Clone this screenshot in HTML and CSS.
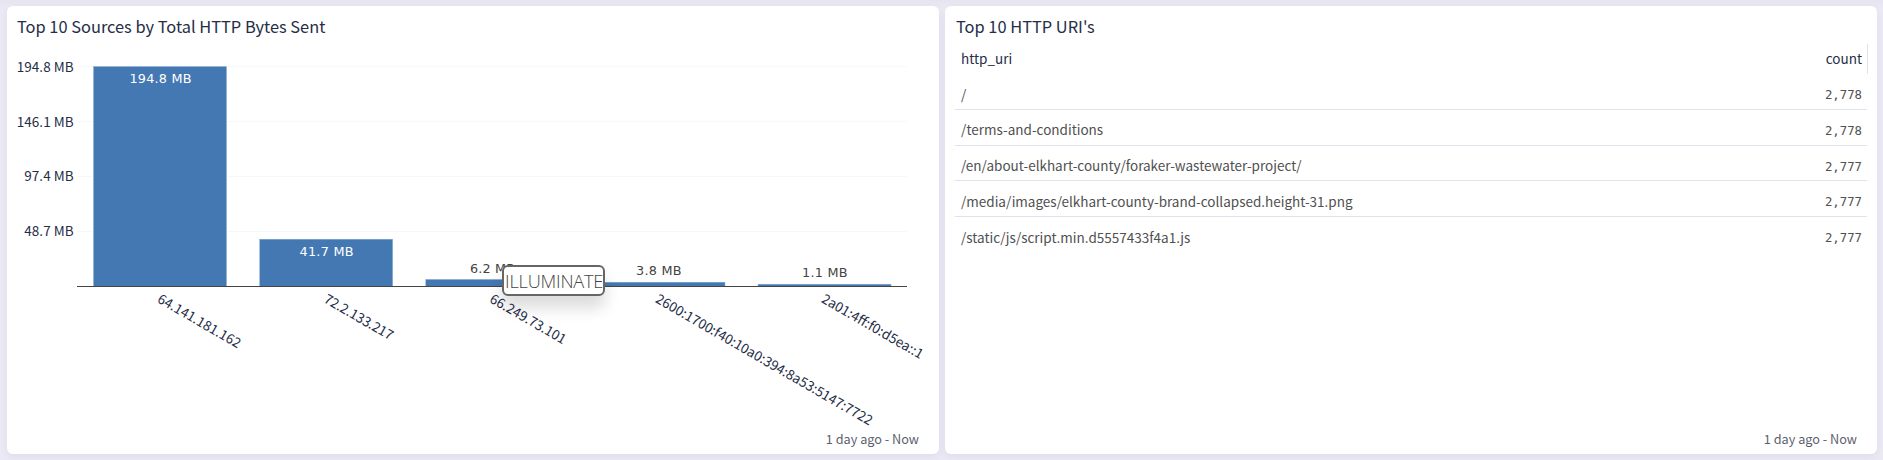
FILE: index.html
```html
<!DOCTYPE html>
<html lang="en">
<head>
<meta charset="utf-8">
<title>HTTP Overview</title>
<link rel="stylesheet" href="styles.css">
</head>
<body>
<main class="dashboard">
  <section class="card">
    <h2 class="title title-chart">Top 10 Sources by Total HTTP Bytes Sent</h2>
    <svg class="chart" width="932" height="400" viewBox="7 40 932 400">
      <g class="grid">
        <path d="M77 66.5H907M77 121.5H907M77 176.5H907M77 231.5H907"/>
      </g>
      <g class="bars">
        <rect x="93.5" y="66.5" width="133" height="220"/>
        <rect x="259.7" y="239.2" width="133" height="47.3"/>
        <rect x="425.8" y="279.4" width="133" height="7.1"/>
        <rect x="592" y="282.2" width="133" height="4.3"/>
        <rect x="758" y="284.2" width="133" height="2.3"/>
      </g>
      <path class="axis" d="M77 286.5H907"/>
      <g class="ticks">
        <text x="16.7" y="72" textLength="57">194.8 MB</text>
        <text x="16.7" y="127" textLength="57">146.1 MB</text>
        <text x="24.2" y="181" textLength="49.5">97.4 MB</text>
        <text x="24.2" y="236" textLength="49.5">48.7 MB</text>
      </g>
      <g class="values">
        <text class="inside" x="129.5" y="83" textLength="62">194.8 MB</text>
        <text class="inside" x="299.5" y="256" textLength="54">41.7 MB</text>
        <text x="470" y="273" textLength="45">6.2 MB</text>
        <text x="636" y="275" textLength="45.5">3.8 MB</text>
        <text x="802" y="277" textLength="45.5">1.1 MB</text>
      </g>
      <g class="ticks">
        <text transform="translate(156.5 301.8) rotate(30)" textLength="93.5">64.141.181.162</text>
        <text transform="translate(322.9 301.8) rotate(30)" textLength="77.5">72.2.133.217</text>
        <text transform="translate(488.8 301.8) rotate(30)" textLength="85.5">66.249.73.101</text>
        <text transform="translate(654.5 301.8) rotate(30)" textLength="248">2600:1700:f40:10a0:394:8a53:5147:7722</text>
        <text transform="translate(820.5 301.8) rotate(30)" textLength="115">2a01:4ff:f0:d5ea::1</text>
      </g>
    </svg>
    <div class="tooltip">ILLUMINATE</div>
    <footer class="range">1 day ago - Now</footer>
  </section>
  <section class="card">
    <h2 class="title">Top 10 HTTP URI's</h2>
    <div class="table">
      <div class="row head"><span>http_uri</span><span>count</span></div>
      <div class="row"><span>/</span><span class="num">2,778</span></div>
      <div class="row raised"><span>/terms-and-conditions</span><span class="num">2,778</span></div>
      <div class="row short raised"><span>/en/about-elkhart-county/foraker-wastewater-project/</span><span class="num">2,777</span></div>
      <div class="row"><span>/media/images/elkhart-county-brand-collapsed.height-31.png</span><span class="num">2,777</span></div>
      <div class="row"><span>/static/js/script.min.d5557433f4a1.js</span><span class="num">2,777</span></div>
    </div>
    <footer class="range">1 day ago - Now</footer>
  </section>
</main>
</body>
</html>
```

FILE: styles.css
```css
* { box-sizing: border-box; }
body {
  margin: 0;
  height: 460px;
  overflow: hidden;
  background: linear-gradient(#e6e4ef, #ebe9f4 8px);
  font-family: "Noto Sans CJK SC", sans-serif;
  color: #252d47;
}
.dashboard {
  display: grid;
  grid-template-columns: 932px 932px;
  gap: 6px;
  padding: 6px 6px 6px 7px;
}
.card {
  position: relative;
  display: flex;
  flex-direction: column;
  height: 448px;
  background: #fff;
  border-radius: 6px;
  box-shadow: 0 3px 8px rgba(60, 50, 100, 0.06);
}
.title {
  height: 34px;
  margin: 0;
  padding-left: 11px;
  font-size: 16.4px;
  font-weight: 400;
  line-height: 40px;
  white-space: nowrap;
}
.title-chart { padding-left: 10px; }
.chart { display: block; overflow: visible; }
.grid path { stroke: #f7f8fd; fill: none; }
.bars rect { fill: #4478b3; stroke: #8fb0d3; stroke-width: 0.5px; }
.axis { stroke: #444; }
.ticks { font-size: 13.5px; fill: #252d47; }
.values { font: 12.8px Verdana, "DejaVu Sans", sans-serif; fill: #444; }
.values .inside { fill: #fff; }
.tooltip {
  position: absolute;
  left: 495px;
  top: 259px;
  width: 103px;
  height: 31px;
  padding-left: 1px;
  border: 2px solid #666;
  border-radius: 6px;
  background: #fff;
  box-shadow: 0 12px 16px rgba(0, 0, 0, 0.14);
  color: #444;
  font: 300 18.2px/28px "Open Sans", sans-serif;
  letter-spacing: -0.2px;
  text-align: center;
  white-space: nowrap;
}
.range {
  position: absolute;
  right: 20px;
  bottom: 5px;
  color: #5c5f6d;
  font-size: 12.7px;
  line-height: 20px;
}
.table {
  width: 913px;
  margin: 4px 0 0 10px;
  font-size: 13.5px;
  color: #505050;
}
.row {
  display: flex;
  justify-content: space-between;
  height: 36px;
  width: 912px;
  padding: 0 5px 0 6px;
  border-bottom: 1px solid #e1e2ec;
  line-height: 40px;
}
.row.short { height: 35px; }
.row.raised { line-height: 38px; }
.row:last-child { border-bottom: 0; }
.row.head {
  width: 913px;
  height: 30px;
  border-bottom: 0;
  border-right: 1px solid #e1e2ec;
  color: #252d47;
  line-height: 28px;
}
.num { font: 12.3px/42px "DejaVu Sans Mono", monospace; }
```
